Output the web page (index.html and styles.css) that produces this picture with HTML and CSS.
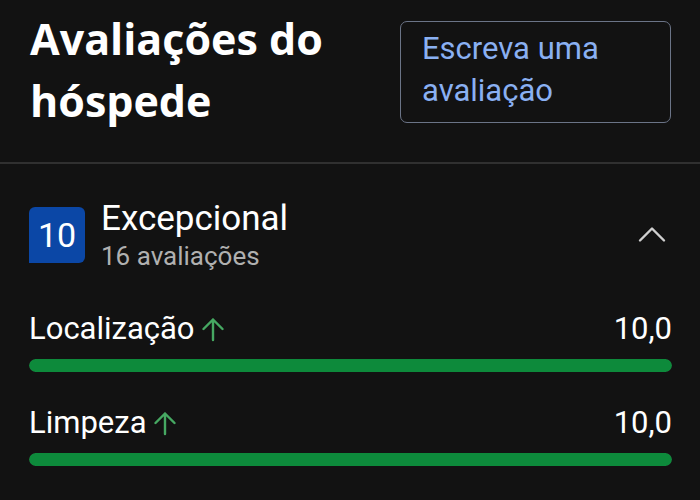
FILE: index.html
```html
<!DOCTYPE html>
<html lang="pt">
<head>
<meta charset="utf-8">
<link rel="stylesheet" href="styles.css">
</head>
<body>
<header class="head">
  <h1 class="title">Avaliações do hóspede</h1>
  <button class="write">Escreva uma avaliação</button>
</header>
<section class="summary">
  <div class="score-row">
    <div class="badge">10</div>
    <div class="score-text">
      <div class="label">Excepcional</div>
      <div class="count">16 avaliações</div>
    </div>
    <svg class="chev" width="30" height="18" viewBox="0 0 30 18"><path d="M3 15.5 L15 3.5 L27 15.5" fill="none" stroke="#cfcfcf" stroke-width="2.4" stroke-linecap="round" stroke-linejoin="round"/></svg>
  </div>
  <div class="metric">
    <div class="metric-top">
      <span class="metric-name">Localização <svg class="up" width="22" height="25" viewBox="0 0 22 25"><path d="M11 23 V2.5 M1.5 12 L11 2.5 L20.5 12" fill="none" stroke="#46a862" stroke-width="2.4" stroke-linecap="round" stroke-linejoin="round"/></svg></span>
      <span class="metric-val">10,0</span>
    </div>
    <div class="bar"><div class="fill" style="width:100%"></div></div>
  </div>
  <div class="metric">
    <div class="metric-top">
      <span class="metric-name">Limpeza <svg class="up" width="22" height="25" viewBox="0 0 22 25"><path d="M11 23 V2.5 M1.5 12 L11 2.5 L20.5 12" fill="none" stroke="#46a862" stroke-width="2.4" stroke-linecap="round" stroke-linejoin="round"/></svg></span>
      <span class="metric-val">10,0</span>
    </div>
    <div class="bar"><div class="fill" style="width:100%"></div></div>
  </div>
</section>
</body>
</html>
```
FILE: styles.css
```css
html, body {
  margin: 0;
  padding: 0;
  background: #121212;
  color: #ffffff;
  font-family: Roboto, "Liberation Sans", sans-serif;
  width: 700px;
  height: 500px;
  overflow: hidden;
}
.head {
  display: flex;
  justify-content: space-between;
  align-items: flex-start;
  padding: 20px 29px 0 30px;
  height: 142px;
  border-bottom: 2px solid #303030;
}
.title {
  margin: -12px 0 0 0;
  font-family: "Open Sans", sans-serif;
  font-weight: 700;
  font-size: 43px;
  line-height: 62px;
  width: 345px;
}
.write {
  box-sizing: border-box;
  width: 271px;
  height: 102px;
  margin-top: 1px;
  background: transparent;
  border: 1.5px solid #6b7487;
  border-radius: 7px;
  color: #8ab0f2;
  font-family: Roboto, sans-serif;
  font-size: 31px;
  line-height: 42px;
  text-align: left;
  padding: 0 16px 0 21px;
  display: flex;
  align-items: flex-start;
  padding-top: 6px;
}
.summary {
  padding: 0 28px 0 29px;
}
.score-row {
  display: flex;
  align-items: flex-start;
  margin-top: 35px;
}
.badge {
  width: 56px;
  height: 56px;
  background: #0b47a6;
  border-radius: 6px 6px 6px 0;
  display: flex;
  align-items: center;
  justify-content: center;
  font-size: 34px;
  margin-top: 8px;
}
.score-text {
  margin-left: 16px;
  flex: 1;
}
.label {
  font-size: 35px;
  line-height: 40px;
}
.count {
  font-size: 26px;
  line-height: 34px;
  color: #b0b0b0;
}
.chev {
  margin-right: 5px;
  margin-top: 26px;
}
.metric {
  margin-top: 38px;
}
.metric + .metric {
  margin-top: 33px;
}
.metric-top {
  display: flex;
  justify-content: space-between;
  align-items: center;
  font-size: 31px;
  line-height: 36px;
}
.metric-name {
  display: flex;
  align-items: center;
  gap: 7px;
}
.up {
  margin-top: 1px;
}
.bar {
  margin-top: 12px;
  height: 13px;
  border-radius: 7px;
  background: #2a2a2a;
  overflow: hidden;
}
.fill {
  height: 100%;
  background: #0d8a3b;
  border-radius: 7px;
}
```
